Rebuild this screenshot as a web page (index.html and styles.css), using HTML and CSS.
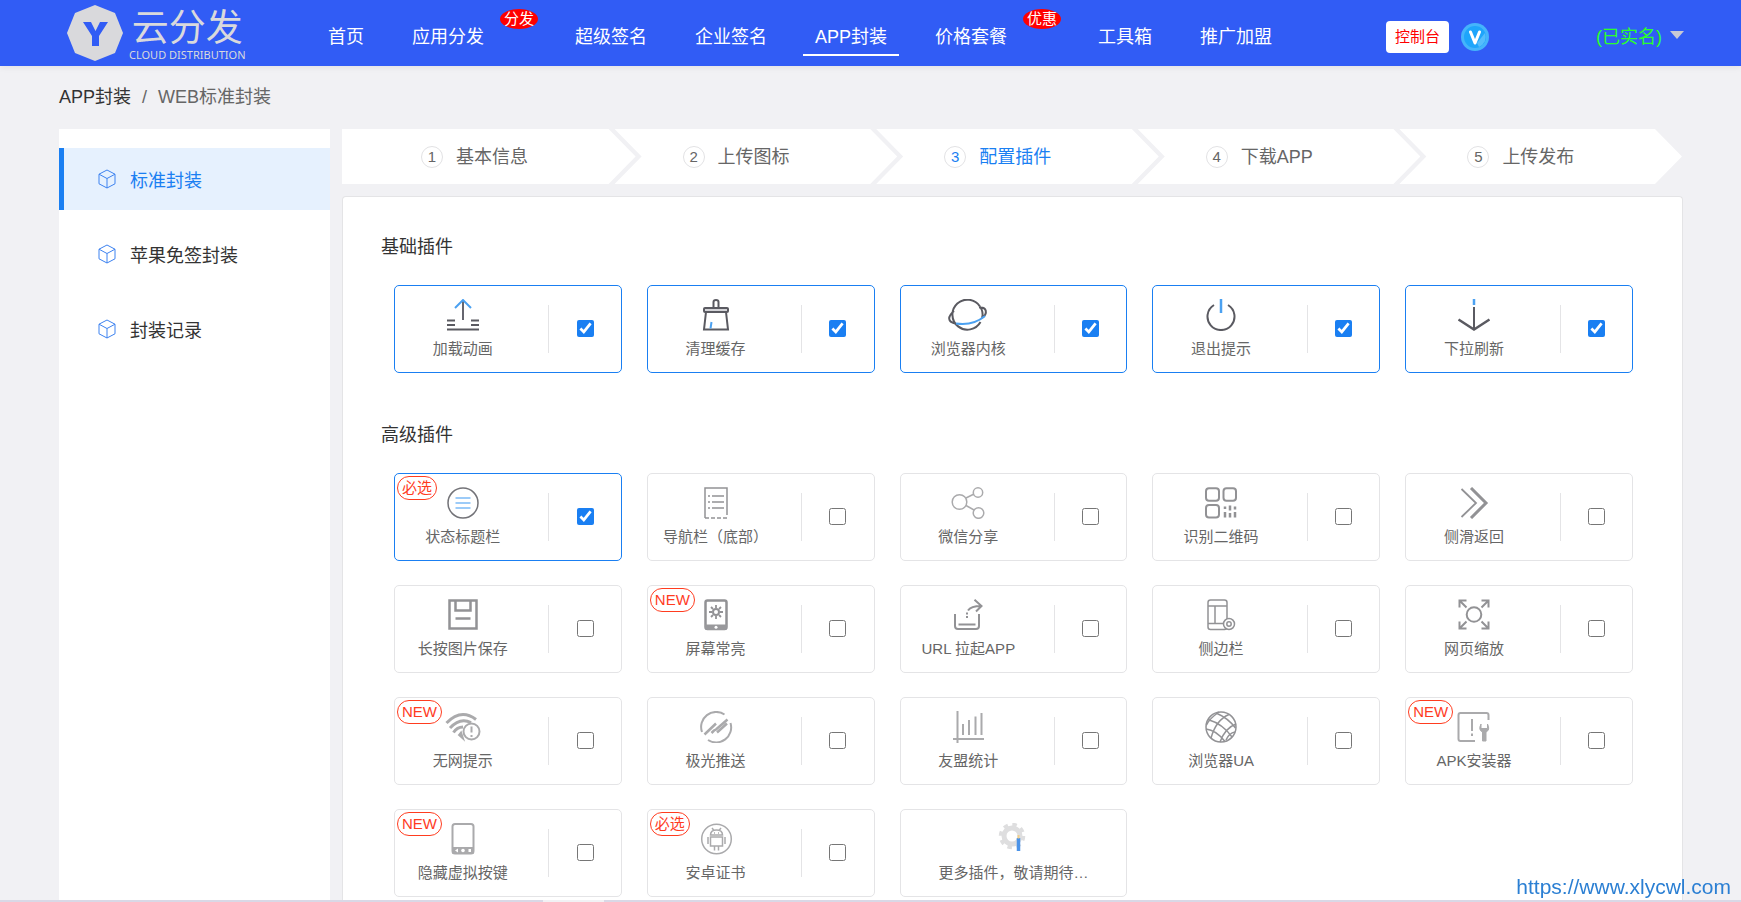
FILE: index.html
```
<!DOCTYPE html>
<html lang="zh-CN">
<head>
<meta charset="utf-8">
<title>WEB标准封装</title>
<link rel="stylesheet" href="styles.css">
</head>
<body>
<header class="topbar">
  <a class="logo" href="#">
    <svg class="logo-mark" viewBox="0 0 56 56" aria-hidden="true"><path d="M28 0 L48 8 L56 28 L48 48 L28 56 L8 48 L0 28 L8 8Z" fill="#d9d9dc"/><path d="M16 17h8l4.500 9 4.500-9h8L32 31v10h-7V31Z" fill="#315cf5"/></svg>
    <span class="logo-text"><span class="logo-cn">云分发</span><span class="logo-en">CLOUD DISTRIBUTION</span></span>
  </a>
  <nav class="nav">
    <a href="#">首页</a>
    <a class="has-badge" href="#">应用分发<span class="nav-badge">分发</span></a>
    <a href="#">超级签名</a>
    <a href="#">企业签名</a>
    <a class="current" href="#">APP封装</a>
    <a class="has-badge" href="#">价格套餐<span class="nav-badge">优惠</span></a>
    <a href="#">工具箱</a>
    <a href="#">推广加盟</a>
  </nav>
  <div class="account">
    <a class="console" href="#">控制台</a>
    <svg class="vip" viewBox="0 0 28 28" aria-hidden="true"><circle cx="14" cy="14" r="14" fill="#45b4fb"/><circle cx="14" cy="14" r="11" fill="#1ea5fb"/><path d="M16 20 24 10a11 11 0 0 1-6 14Z" fill="#55bdfc"/><path d="M9.500 9l4.500 11L18.500 9" fill="none" stroke="#fff" stroke-width="3" stroke-linecap="round" stroke-linejoin="round"/></svg>
    <button class="user" type="button">(已实名)<svg viewBox="0 0 14 8" width="14" height="8" aria-hidden="true"><path d="M0 0h14L7 8Z" fill="#c8c9d4"/></svg></button>
  </div>
</header>

<div class="page">
  <nav class="crumbs" aria-label="面包屑"><a href="#">APP封装</a><span>/</span><span>WEB标准封装</span></nav>
  <div class="columns">
    <aside class="sidebar">
      <a class="active" href="#"><svg class="cube" viewBox="0 0 18 20"><path d="M9 1l8 4.200v9.600L9 19l-8-4.200V5.200ZM1 5.200l8 4.300 8-4.300M9 9.500V19"/></svg>标准封装</a>
      <a href="#"><svg class="cube" viewBox="0 0 18 20"><path d="M9 1l8 4.200v9.600L9 19l-8-4.200V5.200ZM1 5.200l8 4.300 8-4.300M9 9.500V19"/></svg>苹果免签封装</a>
      <a href="#"><svg class="cube" viewBox="0 0 18 20"><path d="M9 1l8 4.200v9.600L9 19l-8-4.200V5.200ZM1 5.200l8 4.300 8-4.300M9 9.500V19"/></svg>封装记录</a>
    </aside>
    <main class="main">
      <ol class="steps">
        <li><span class="num">1</span>基本信息</li>
        <li><span class="num">2</span>上传图标</li>
        <li class="on"><span class="num">3</span>配置插件</li>
        <li><span class="num">4</span>下载APP</li>
        <li><span class="num">5</span>上传发布</li>
      </ol>
      <section class="panel">
        <h2>基础插件</h2>
        <div class="grid">
          <label class="card checked"><span class="info"><svg class="icon dark" viewBox="0 0 36 32"><path d="M18 2v19" stroke="#66666f"/><path d="M2 21.500h8M2 26h8M26 21.500h8M26 26h8M2 30.500h32"/><path class="blue" d="M10 9l8-8 8 8"/></svg><span>加载动画</span></span><span class="pick"><input type="checkbox" checked></span></label>
          <label class="card checked"><span class="info"><svg class="icon dark" viewBox="0 0 36 32"><path d="M5.500 9h25v4h-25Z" fill="#d4d4d8" stroke="none"/><path d="M15.500 8.500V3q0-2 2.500-2t2.500 2v5.500M7 9h22q1 0 1 1v2q0 1-1 1H7q-1 0-1-1v-2q0-1 1-1ZM8 13L6 30.500h24L28 13"/><path class="blue" d="M13.500 23l-1 6.500"/></svg><span>清理缓存</span></span><span class="pick"><input type="checkbox" checked></span></label>
          <label class="card checked"><span class="info"><svg class="icon dark wide" viewBox="0 0 40 32"><path d="M32.500 23A15 15 0 1 1 32 7.500M6 12C-1 18 0 23 7 24.500"/><path d="M31 8.500c8-1 9 6 3 10.500M32 7.500q4 6 2 11.500"/><path class="blue" d="M8 24.500Q25 27 37 17"/></svg><span>浏览器内核</span></span><span class="pick"><input type="checkbox" checked></span></label>
          <label class="card checked"><span class="info"><svg class="icon dark" viewBox="0 0 36 32"><path d="M11 6a13.500 13.500 0 1 0 14 0"/><path class="blue" d="M18 0v14" stroke-width="2.500"/></svg><span>退出提示</span></span><span class="pick"><input type="checkbox" checked></span></label>
          <label class="card checked"><span class="info"><svg class="icon dark" viewBox="0 0 36 32"><path d="M18 8v22" /><path d="M2.500 20.500L18 30.500l15.500-10" stroke-width="2.500"/><path class="blue" d="M18 0v6" stroke-width="2.500"/></svg><span>下拉刷新</span></span><span class="pick"><input type="checkbox" checked></span></label>
        </div>
        <h2>高级插件</h2>
        <div class="grid">
          <label class="card checked"><span class="tag">必选</span><span class="info"><svg class="icon" viewBox="0 0 36 32"><circle cx="18" cy="16" r="15" stroke="#737378"/><path d="M10.500 11h15M10.500 16h15M10.500 21h15" stroke="#9ccbf8" stroke-width="2"/></svg><span>状态标题栏</span></span><span class="pick"><input type="checkbox" checked></span></label>
          <label class="card"><span class="info"><svg class="icon" viewBox="0 0 36 32"><path d="M7 31V1h22v27M7 31h4M13 31h4M19 31h4M25 31h4M10 9h2M14 9h12M10 15h2M14 15h12M10 21h2M14 21h12"/></svg><span>导航栏（底部）</span></span><span class="pick"><input type="checkbox"></span></label>
          <label class="card"><span class="info"><svg class="icon light" viewBox="0 0 36 32"><circle cx="9.500" cy="15" r="7.300"/><circle cx="28" cy="5.500" r="4.700"/><circle cx="28.500" cy="26" r="5.300"/><path d="M16 11l8-4M16 18.500l8 4.500"/></svg><span>微信分享</span></span><span class="pick"><input type="checkbox"></span></label>
          <label class="card"><span class="info"><svg class="icon heavy" viewBox="0 0 36 32"><rect x="3" y="1.200" width="13" height="12.500" rx="3"/><rect x="20.500" y="1.200" width="12.500" height="12.500" rx="3"/><rect x="3" y="18" width="13" height="12.500" rx="3"/><path d="M22 19.500v2.500M22 25v5.500M27 18.500v5M27 26v4.500M32 19.500v3M32 25v5.500" stroke-width="2.500"/></svg><span>识别二维码</span></span><span class="pick"><input type="checkbox"></span></label>
          <label class="card"><span class="info"><svg class="icon heavy" viewBox="0 0 36 32"><path d="M5.500 2L20 16 5.500 30" stroke-width="1.800"/><path d="M15 1l15 15-15 15" stroke-width="3"/></svg><span>侧滑返回</span></span><span class="pick"><input type="checkbox"></span></label>

          <label class="card"><span class="info"><svg class="icon heavy" viewBox="0 0 36 32"><path d="M4.500 1.500h27v28h-27ZM10.500 1.500v10h15v-10M10.500 19.500h15" stroke-width="2.500"/></svg><span>长按图片保存</span></span><span class="pick"><input type="checkbox"></span></label>
          <label class="card"><span class="tag">NEW</span><span class="info"><svg class="icon heavy" viewBox="0 0 36 32"><rect x="7.500" y="1.500" width="21" height="28.500" rx="2" stroke-width="2.500"/><path d="M7 25.500h22V29q0 2-2 2H9q-2 0-2-2Z" fill="#99999c" stroke="none"/><circle cx="18" cy="28.200" r="1.500" fill="#fff" stroke="none"/><circle cx="18" cy="13" r="3" stroke-width="2"/><path stroke-width="1.800" d="M18 6v3M18 17v3M11 13h3M22 13h3M13 8l2 2M23 8l-2 2M13 18l2-2M23 18l-2-2"/></svg><span>屏幕常亮</span></span><span class="pick"><input type="checkbox"></span></label>
          <label class="card"><span class="info"><svg class="icon heavy" viewBox="0 0 36 32"><path d="M5 15v12q0 3 3 3h18q3 0 3-3V15"/><path d="M8.500 25.500h17M18 11.500q3-4.500 13-4.500M24.500 .800L31.500 7 26 12.500M17 13.500v2M17 17v2"/></svg><span>URL 拉起APP</span></span><span class="pick"><input type="checkbox"></span></label>
          <label class="card"><span class="info"><svg class="icon" viewBox="0 0 36 32"><rect x="5" y="1" width="19" height="29.500" rx="2.500"/><path d="M5 7h19M12 7v17.500M5 24.500h15"/><circle cx="26" cy="25" r="5.500" fill="#fff"/><circle cx="26" cy="25" r="2.200"/></svg><span>侧边栏</span></span><span class="pick"><input type="checkbox"></span></label>
          <label class="card"><span class="info"><svg class="icon heavy" viewBox="0 0 36 32"><circle cx="18" cy="15.500" r="7.300"/><path d="M3.500 8.500v-7h7M3.500 1.500l7 7M25.500 1.500h7v7M32.500 1.500l-7 7M3.500 22.500v7h7M3.500 29.500l7-7M25.500 29.500h7v-7M32.500 29.500l-7-7"/></svg><span>网页缩放</span></span><span class="pick"><input type="checkbox"></span></label>

          <label class="card"><span class="tag">NEW</span><span class="info"><svg class="icon heavy light" viewBox="0 0 36 32"><path d="M1.500 12Q16-3 31 8.500M5 17Q15 6 26 11.500M8.500 21.500Q12 16 18 16" stroke-width="3"/><path d="M14 24l2-2.500 2 6Z" fill="#aaaaac"/><circle cx="26.500" cy="20.500" r="8"/><path d="M26.500 15.500v6M26.500 24v2"/></svg><span>无网提示</span></span><span class="pick"><input type="checkbox"></span></label>
          <label class="card"><span class="info"><svg class="icon heavy light" viewBox="0 0 36 32"><path d="M4 21A15 15 0 0 1 26.500 3.500M32.500 12A15 15 0 0 1 10 29"/><path stroke-width="2.500" d="M6.500 23.500L18 12.500M13.500 22l2.500-2.500 2-1 11.500-10M19 21.500l10-9"/></svg><span>极光推送</span></span><span class="pick"><input type="checkbox"></span></label>
          <label class="card"><span class="info"><svg class="icon heavy light" viewBox="0 0 36 32"><path d="M7.500 0v32M3 28h31"/><path d="M13 13v11M19 9v15M25.500 5.500V24M31.500 2v22"/></svg><span>友盟统计</span></span><span class="pick"><input type="checkbox"></span></label>
          <label class="card"><span class="info"><svg class="icon" viewBox="0 0 36 32"><circle cx="18" cy="16" r="15"/><path d="M5 8.500Q20 13 29 26M13 2Q25 7 32.500 17M3 18q10 1 19 12.500M26 3.500Q13 9 8 27M33 13Q22 17 17 31M16 1Q6 8 3.500 14M32 21q-6 1-9 8"/></svg><span>浏览器UA</span></span><span class="pick"><input type="checkbox"></span></label>
          <label class="card"><span class="tag">NEW</span><span class="info"><svg class="icon heavy light" viewBox="0 0 36 32"><path d="M19 30H4.500q-2 0-2-2V4q0-2 2-2h26q2 0 2 2v5M16 8v12M16 22.500v2.500"/><path d="M25 13q-3 6 1.500 8v9h3.500v-9q4.500-2 1.500-8v4.500h-6.500Z" fill="#aaaaac" stroke-width="1"/></svg><span>APK安装器</span></span><span class="pick"><input type="checkbox"></span></label>

          <label class="card"><span class="tag">NEW</span><span class="info"><svg class="icon heavy light" viewBox="0 0 36 32"><rect x="7.500" y="1" width="21" height="29.500" rx="2.500"/><path d="M7.500 24h21v7h-21Z" fill="#aaaaac" stroke="none"/><path d="M10 27.500l3-2v4ZM23.500 26h2.500v3h-2.500Z" fill="#fff" stroke="none"/><circle cx="18" cy="27.500" r="1.800" fill="#fff" stroke="none"/></svg><span>隐藏虚拟按键</span></span><span class="pick"><input type="checkbox"></span></label>
          <label class="card"><span class="tag">必选</span><span class="info"><svg class="icon light" viewBox="0 0 36 32"><circle cx="18.500" cy="16" r="14.800"/><path d="M12.500 12q0-5 6-5t6 5ZM12.500 14h12v9h-12ZM14 5l2 2.500M23 5l-2 2.500M10 14v7M27 14v7M16.500 23v4.500M20.500 23v4.500M16 10h1M20 10h1"/></svg><span>安卓证书</span></span><span class="pick"><input type="checkbox"></span></label>
          <div class="card more"><svg class="icon" viewBox="0 0 36 32"><circle cx="17" cy="13" r="8" stroke="#dededf" stroke-width="5"/><circle cx="17" cy="13" r="11.500" stroke="#dededf" stroke-width="3.500" stroke-dasharray="4.500 4.530"/><path d="M23.500 15v13" stroke="#4b93e8" stroke-width="3.500"/><path d="M23.500 12v3.500" stroke="#f1cf8a" stroke-width="2"/></svg><span>更多插件，敬请期待…</span></div>
        </div>
      </section>
    </main>
  </div>
</div>
<a class="watermark" href="https://www.xlycwl.com">https://www.xlycwl.com</a>
<div class="scroll-strip"><span></span></div>
</body>
</html>
```
FILE: styles.css
```
* { box-sizing: border-box; }
body {
  margin: 0;
  min-height: 100vh;
  display: flex;
  flex-direction: column;
  background: #f1f1f4;
  color: #333;
  font-family: "Liberation Sans", "Noto Sans CJK SC", sans-serif;
  font-size: 18px;
}
a { color: inherit; text-decoration: none; }
svg { display: block; flex: none; }

.topbar {
  display: flex;
  align-items: center;
  height: 66px;
  padding: 0 57px 0 67px;
  background: #315cf5;
  box-shadow: 0 2px 6px rgba(0, 0, 0, .06);
  color: #fff;
}
.logo { display: flex; align-items: center; gap: 6px; width: 249px; color: #d9d9dc; }
.logo-mark { width: 56px; height: 56px; }
.logo-text { display: flex; flex-direction: column; align-items: center; padding-top: 6px; white-space: nowrap; }
.logo-cn { font-size: 37px; line-height: 38px; }
.logo-en { font: 11px/14px "Noto Sans", sans-serif; }
.nav { align-self: flex-start; display: flex; gap: 24px; padding-top: 16px; white-space: nowrap; }
.nav a { position: relative; padding: 6px 12px 2px; line-height: 30px; border-bottom: 2px solid transparent; }
.nav .current { border-color: #fff; }
.nav .has-badge { margin-right: 43px; }
.nav-badge {
  position: absolute;
  top: -7px;
  left: 100px;
  padding: 0 4px;
  border-radius: 50%;
  background: #f00;
  font-size: 15px;
  line-height: 20px;
}
.account { display: flex; align-items: center; margin-left: auto; padding-top: 7px; white-space: nowrap; }
.console { padding: 0 9px; border-radius: 4px; background: #fff; color: #f00; font-size: 15px; line-height: 32px; }
.vip { width: 28px; height: 28px; margin-left: 12px; }
.user {
  display: flex;
  align-items: center;
  gap: 8px;
  margin-left: 107px;
  padding: 0 0 4px;
  border: 0;
  background: none;
  color: #2bff2b;
  font: inherit;
}

.page { flex: 1; display: flex; flex-direction: column; padding: 0 58px 0 59px; }
.crumbs { display: flex; gap: 11px; height: 63px; line-height: 62px; color: #666; }
.crumbs a { color: #333; }
.columns { flex: 1; display: flex; gap: 12px; }
.sidebar { flex: 0 0 271px; display: flex; flex-direction: column; gap: 13px; padding-top: 19px; background: #fff; }
.sidebar a { display: flex; align-items: center; gap: 14px; height: 62px; padding-left: 34px; border-left: 5px solid transparent; }
.sidebar .active { border-color: #1a7ff2; background: #e6f1fe; color: #1a7ff2; }
.cube { width: 18px; height: 20px; fill: none; stroke: #3d82f0; }

.main { flex: 1; min-width: 0; display: flex; flex-direction: column; gap: 12px; }
.steps { display: flex; margin: 0; padding: 0 1px 0 0; list-style: none; color: #666; }
.steps li {
  flex: 1 1 0;
  display: flex;
  align-items: center;
  gap: 13px;
  height: 55px;
  margin-left: -21px;
  padding: 0 0 4px 68px;
  background: #fff;
  clip-path: polygon(0 0, calc(100% - 27px) 0, 100% 50%, calc(100% - 27px) 100%, 0 100%, 27px 50%);
  white-space: nowrap;
}
.steps li:first-child {
  flex-basis: 10px;
  margin-left: 0;
  padding-left: 79px;
  clip-path: polygon(0 0, calc(100% - 27px) 0, 100% 50%, calc(100% - 27px) 100%, 0 100%);
}
.steps .on { color: #1a7ff2; }
.num { width: 22px; height: 22px; margin-top: 4px; border: 1px solid #e2e2e4; border-radius: 50%; font-size: 15px; line-height: 20px; text-align: center; }

.panel { flex: 1; padding: 35px 49px 2px 38px; border: 1px solid #e4e4e6; border-bottom: 0; border-radius: 4px 4px 0 0; background: #fff; }
.panel h2 { margin: 0; font-size: 18px; line-height: 30px; font-weight: 400; }
.grid { display: grid; grid-template-columns: repeat(5, 1fr); gap: 24px 25px; margin: 23px 0 47px 13px; }
.grid:last-child { margin-bottom: 0; }
.card {
  position: relative;
  display: flex;
  align-items: center;
  height: 88px;
  border: 1px solid #e4e4e6;
  border-radius: 5px;
  color: #666;
  font-size: 15px;
  line-height: 24px;
  white-space: nowrap;
}
.checked { border-color: #1a7ff2; }
.info { flex: 0 0 60%; align-self: flex-start; display: flex; flex-direction: column; align-items: center; gap: 6px; padding-top: 13px; }
.pick { flex: 1; display: flex; align-items: center; justify-content: center; height: 48px; margin-left: 18px; border-left: 1px solid #e4e4e6; }
.pick input { width: 17px; height: 17px; margin: 0 0 1px; accent-color: #1a7ff2; }
.tag {
  position: absolute;
  top: 2px;
  left: 2px;
  padding: 0 4px;
  border: 1px solid #ff3c1f;
  border-radius: 12px;
  color: #ff3c1f;
  line-height: 22px;
}
.more { flex-direction: column; gap: 6px; padding-top: 13px; }
.icon { width: 36px; height: 32px; fill: none; stroke: #929295; stroke-width: 1.5; }
.wide { width: 40px; }
.heavy { stroke-width: 2; }
.light { stroke: #aaaaac; }
.dark { stroke: #5a5a61; stroke-width: 2; }
.blue { stroke: #4ba1f1; }

.watermark { position: fixed; right: 10px; bottom: 2px; color: #2b7fd3; font-size: 21px; line-height: 26px; }
.scroll-strip { position: fixed; left: 0; right: 0; bottom: 0; height: 2px; padding-left: 543px; background: #d9d8e6; }
.scroll-strip span { display: block; width: 61px; height: 2px; background: #f1f1f4; }
```
